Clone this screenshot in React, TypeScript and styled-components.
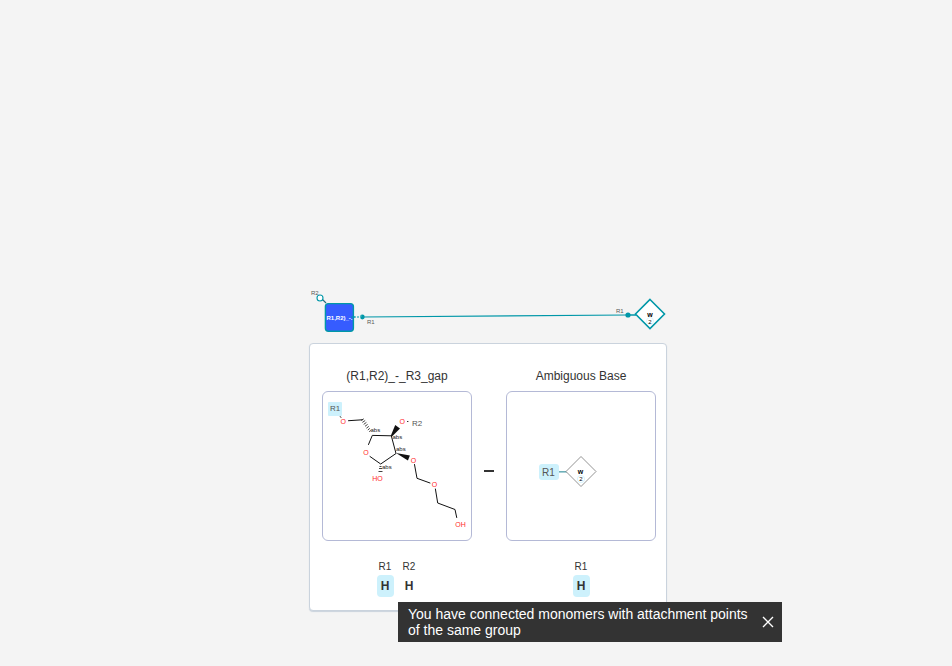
import React, { useId } from "react";
import styled, { createGlobalStyle } from "styled-components";

const GlobalStyle = createGlobalStyle`
  * { box-sizing: border-box; }
  body {
    margin: 0;
    background: #f4f4f4;
    color: #333333;
    font-family: "Liberation Sans", Arial, sans-serif;
  }
  button { font-family: inherit; color: inherit; }
  svg { display: block; }
`;

const Page = styled.main`
  min-height: 100vh;
  display: flex;
  flex-direction: column;
  align-items: center;
  justify-content: flex-end;
  padding: 0 0 55px 24px;
`;

const Chain = styled.svg`
  width: 358px;
  max-width: 100%;
  height: 44px;
  margin-bottom: 10px;
  overflow: visible;
`;

const Preview = styled.section`
  display: flex;
  align-items: stretch;
  gap: 10px;
  padding: 24px 10px 13px 12px;
  background: #ffffff;
  border: 1px solid #cad3dd;
  border-radius: 4px;
  box-shadow: 0 1px 1px #cad3dd;
`;

const Monomer = styled.article`
  display: flex;
  flex-direction: column;
  align-items: center;
`;

const MonomerName = styled.h2`
  margin: 0 0 7px;
  font-size: 12px;
  line-height: 16px;
  font-weight: 400;
`;

const Structure = styled.div`
  width: 150px;
  height: 150px;
  border: 1px solid #b4b9d6;
  border-radius: 6px;
`;

const BondDivider = styled.div`
  display: flex;
  align-items: center;
  justify-content: center;
  width: 14px;
  height: 150px;
  margin-top: 28px;

  &::before {
    content: "";
    width: 10px;
    height: 2px;
    background: #333333;
  }
`;

const Points = styled.div`
  display: flex;
  gap: 7px;
  margin-top: 19px;
`;

const Point = styled.div`
  display: flex;
  flex-direction: column;
  align-items: center;
  gap: 1px;
  width: 17px;
  font-size: 10px;
  line-height: 14px;
`;

const LeavingGroup = styled.button<{ $selected?: boolean }>`
  width: 17px;
  height: 22px;
  padding: 0;
  border: 0;
  border-radius: 4px;
  background: ${({ $selected }) => ($selected ? "#cdf1fc" : "transparent")};
  font-size: 12px;
  line-height: 22px;
  font-weight: 700;
`;

const Toast = styled.div`
  position: fixed;
  right: 170px;
  bottom: 24px;
  display: flex;
  align-items: center;
  gap: 8px;
  width: 384px;
  padding: 4px 8px 4px 10px;
  background: #333333;
  color: #ffffff;
`;

const Message = styled.p`
  flex: 1;
  margin: 0;
  font-size: 14px;
  line-height: 16px;
`;

const CloseButton = styled.button`
  display: grid;
  place-items: center;
  width: 12px;
  height: 12px;
  padding: 0;
  border: 0;
  background: none;
  color: #ffffff;
`;

const TEAL = "#0097a8";
const ACCENT = "#ff2a2a";

type PointInfo = { label: string; selected?: boolean };

function AttachmentPoints({ points }: { points: PointInfo[] }) {
  const id = useId();
  return (
    <Points>
      {points.map(({ label, selected }) => (
        <Point key={label}>
          <label htmlFor={`${id}-${label}`}>{label}</label>
          <LeavingGroup id={`${id}-${label}`} $selected={selected} aria-pressed={!!selected}>
            H
          </LeavingGroup>
        </Point>
      ))}
    </Points>
  );
}

function ConnectedMonomers() {
  return (
    <Chain viewBox="0 0 358 44" role="img" aria-label="Connected monomers">
      <g stroke={TEAL} fill="none">
        <path d="M13 10 17 14" strokeWidth="1.1" stroke="#276a7c" />
        <circle cx="11" cy="9" r="3" fill="#fff" strokeWidth="1.1" />
        <path d="M53 28 319 26" strokeWidth="1.2" />
        <path d="M319 26H327" strokeWidth="1.5" />
        <path d="M45 28H53" strokeWidth="1.2" strokeDasharray="2 1" />
      </g>
      <rect x="16.4" y="14.6" width="28" height="27.6" rx="3" fill="#365cff" stroke={TEAL} strokeWidth="1.4" />
      <path d="M42 28H46" stroke={TEAL} />
      <circle cx="53.3" cy="28" r="2.4" fill={TEAL} />
      <path d="M51 27h1.5M51 29h1" stroke="#d3eeee" strokeWidth="0.7" />
      <circle cx="319" cy="26" r="2.6" fill={TEAL} />
      <path d="M341 10.5 355.5 25 341 39.5 326.5 25Z" fill="#fff" stroke={TEAL} strokeWidth="1.6" />
      <circle cx="341" cy="32" r="3.5" fill="#fff" stroke="#cdf1fc" strokeWidth="0.7" />
      <g fontSize="6" fill="#585858">
        <text x="2" y="6">R2</text>
        <text x="58" y="35">R1</text>
        <text x="307" y="24">R1</text>
      </g>
      <text x="17.5" y="31" fontSize="6" fontWeight="700" fill="#fff">R1,R2)_-.</text>
      <text x="341" y="28" fontSize="7" fontWeight="700" textAnchor="middle">w</text>
      <text x="341" y="35" fontSize="6" textAnchor="middle">2</text>
    </Chain>
  );
}

function SugarStructure() {
  return (
    <svg width="148" height="148" viewBox="0 0 148 148" role="img" aria-label="Structure of (R1,R2)_-_R3_gap">
      <rect x="5" y="10" width="14" height="14" rx="1" fill="#cdf1fc" />
      <path d="M17 24.2 18.2 25.8" stroke="#333" />
      <g stroke="#111" strokeWidth="1" fill="none" strokeLinecap="round">
        <path d="M25.5 28.7 39.3 27.8" />
        <path d="M45.5 52.5 49.3 43.4 68.3 43.8 73 61.5 57.7 72 47 64.5" />
        <path d="M91.5 72.5 94 86.3 107 91" />
        <path d="M112.4 97 114.7 111 132 117.5 133.7 125.5" />
      </g>
      <g stroke="#111" strokeWidth="0.8" fill="none">
        <path d="M38.2 28.4 40.8 26.8M39.4 30.4 42.2 28.5M40.7 32.4 43.4 30.4M42 34.3 44.6 32.4M43.4 36.2 45.8 34.4M44.8 38 46.8 36.4M46.2 39.7 47.8 38.4" />
        <path d="M56.5 74.5h2M56 76.5h3M55.5 79.5h4" />
      </g>
      <path d="M67.8 43.8 72.2 33 77 36.4 69 44.4Z" fill="#111" />
      <path d="M73 61 86.9 63.4 84.9 68.4Z" fill="#111" />
      <g fontSize="8" fill="#555" textAnchor="middle">
        <text x="12" y="19">R1</text>
        <text x="94" y="34">R2</text>
      </g>
      <path d="M84 29.5h1.4" stroke="#333" />
      <g fontSize="7" fill={ACCENT} textAnchor="middle">
        <text x="20.3" y="32">O</text>
        <text x="79.3" y="32">O</text>
        <text x="43" y="63">O</text>
        <text x="54.5" y="89">HO</text>
        <text x="90.4" y="71">O</text>
        <text x="111.4" y="95">O</text>
        <text x="137.5" y="135">OH</text>
      </g>
      <g fontSize="6" fill="#222">
        <text x="47.5" y="40">abs</text>
        <text x="69.5" y="47">abs</text>
        <text x="73" y="59">abs</text>
        <text x="59" y="77">abs</text>
      </g>
    </svg>
  );
}

function AmbiguousBase() {
  return (
    <svg width="148" height="148" viewBox="0 0 148 148" role="img" aria-label="Ambiguous base W">
      <rect x="32" y="72" width="20" height="16" rx="3" fill="#cdf1fc" />
      <text x="41.5" y="83.5" fontSize="10" fill="#555" textAnchor="middle">R1</text>
      <path d="M52 79.8H60" stroke="#6db0b9" strokeWidth="1.6" />
      <path d="M74 64.5 89 79.5 74 94.5 59 79.5Z" fill="#fff" stroke="#777" strokeWidth="0.8" />
      <text x="73.5" y="82" fontSize="7" fontWeight="700" textAnchor="middle">w</text>
      <circle cx="74" cy="87" r="3.6" fill="#fff" stroke="#cdf1fc" strokeWidth="0.8" />
      <text x="74" y="89" fontSize="6" textAnchor="middle">2</text>
    </svg>
  );
}

export default function App() {
  return (
    <>
      <GlobalStyle />
      <Page>
        <ConnectedMonomers />
        <Preview>
          <Monomer>
            <MonomerName>(R1,R2)_-_R3_gap</MonomerName>
            <Structure><SugarStructure /></Structure>
            <AttachmentPoints points={[{ label: "R1", selected: true }, { label: "R2" }]} />
          </Monomer>
          <BondDivider />
          <Monomer>
            <MonomerName>Ambiguous Base</MonomerName>
            <Structure><AmbiguousBase /></Structure>
            <AttachmentPoints points={[{ label: "R1", selected: true }]} />
          </Monomer>
        </Preview>
      </Page>
      <Toast role="status">
        <Message>You have connected monomers with attachment points of the same group</Message>
        <CloseButton aria-label="Close">
          <svg width="12" height="12" viewBox="0 0 12 12" stroke="currentColor" strokeWidth="1.4">
            <path d="M1 1 11 11M11 1 1 11" />
          </svg>
        </CloseButton>
      </Toast>
    </>
  );
}
